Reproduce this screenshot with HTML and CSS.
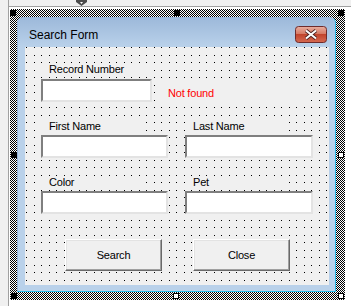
FILE: index.html
```html
<!DOCTYPE html>
<html lang="en">
<head>
    <meta charset="UTF-8">
    <title>Search Form - UserForm designer</title>
    <link rel="stylesheet" href="styles.css">
</head>
<body>
    <div class="ide">
        <div class="gutter"></div>
        <div class="canvas">
            <div class="ruler">
                <svg class="marker" width="11" height="6" viewBox="0 0 11 6">
                    <polygon points="0,0 11,0 11,2 5.5,6 0,2" fill="#4d4d4d"/>
                    <polygon points="4,2 7,2 5.5,4" fill="#fff"/>
                </svg>
            </div>
            <div class="selection">
                <span class="handle tl"></span>
                <span class="handle tm"></span>
                <span class="handle tr"></span>
                <span class="handle ml"></span>
                <span class="handle mr open"></span>
                <span class="handle bl"></span>
                <span class="handle bm open"></span>
                <span class="handle br open"></span>

                <div class="form">
                    <div class="titlebar">
                        <span class="title">Search Form</span>
                        <svg class="close-btn" width="32" height="17" viewBox="0 0 32 17">
                            <defs>
                                <linearGradient id="closeGrad" x1="0" y1="0" x2="0" y2="1">
                                    <stop offset="0" stop-color="#e9b0a2"/>
                                    <stop offset="0.45" stop-color="#d67a64"/>
                                    <stop offset="0.5" stop-color="#c2442c"/>
                                    <stop offset="1" stop-color="#d46a52"/>
                                </linearGradient>
                            </defs>
                            <rect x="0.5" y="0.5" width="31" height="16" rx="3" fill="url(#closeGrad)" stroke="#6e2c2c"/>
                            <path d="M11 4.5 L21 12.5 M21 4.5 L11 12.5" stroke="#4a1f1f" stroke-width="3.6"/>
                            <path d="M11 4.5 L21 12.5 M21 4.5 L11 12.5" stroke="#fff" stroke-width="2"/>
                        </svg>
                    </div>
                    <div class="frame">
                        <div class="client">
                            <div class="row row-record">
                                <div class="field wide">
                                    <span class="caption">Record Number</span>
                                    <input type="text" class="textbox">
                                </div>
                                <div class="status">Not found</div>
                            </div>
                            <div class="row pair">
                                <div class="field">
                                    <span class="caption short">First Name</span>
                                    <input type="text" class="textbox">
                                </div>
                                <div class="field">
                                    <span class="caption short">Last Name</span>
                                    <input type="text" class="textbox">
                                </div>
                            </div>
                            <div class="row pair">
                                <div class="field">
                                    <span class="caption short">Color</span>
                                    <input type="text" class="textbox">
                                </div>
                                <div class="field">
                                    <span class="caption short">Pet</span>
                                    <input type="text" class="textbox">
                                </div>
                            </div>
                            <div class="row buttons">
                                <button class="cmd">Search</button>
                                <button class="cmd">Close</button>
                            </div>
                        </div>
                    </div>
                </div>
            </div>
        </div>
    </div>
</body>
</html>
```

FILE: styles.css
```css
body {
    margin: 0;
    font-family: "Liberation Sans", Arial, sans-serif;
    background: #fff;
}
.ide {
    display: flex;
    width: 351px;
    height: 306px;
    overflow: hidden;
}
.gutter {
    width: 8px;
    flex: none;
    background: #f0f0f0;
    border-right: 1px solid #a0a0a0;
}
.canvas {
    flex: 1;
    background: #fff;
}
.ruler {
    position: relative;
    height: 6px;
    background: #f0f0f0;
    border-bottom: 1px solid #a0a0a0;
}
.marker {
    position: absolute;
    left: 67px;
    top: 0;
}
.selection {
    position: relative;
    width: 335px;
    height: 291px;
    margin: 2px 0 0 1px;
    padding: 8px 0 0 7px;
    box-sizing: border-box;
    background: repeating-conic-gradient(#000 0 25%, #fff 0 50%) 0 0 / 2px 2px;
}
.handle {
    position: absolute;
    width: 6px;
    height: 6px;
    box-sizing: border-box;
    background: #000;
    border: 1px solid #000;
}
.handle.open {
    background: #fff;
}
.tl { left: 0; top: 1px; }
.tm { left: 164px; top: 1px; }
.tr { right: 1px; top: 1px; }
.ml { left: 1px; top: 143px; }
.mr { right: 1px; top: 143px; }
.bl { left: 1px; bottom: 1px; }
.bm { left: 163px; bottom: 1px; }
.br { right: 1px; bottom: 1px; }

.form {
    width: 319px;
    height: 275px;
    box-sizing: border-box;
    display: flex;
    flex-direction: column;
    background: #b9d1ea;
    border: 1px solid #97b4d6;
    border-right-color: #2bbbe8;
    border-bottom-color: #2bbbe8;
    border-radius: 6px 6px 0 0;
}
.titlebar {
    height: 29px;
    box-sizing: border-box;
    display: flex;
    justify-content: space-between;
    align-items: flex-start;
    padding: 10px 8px 0 11px;
    background: linear-gradient(#9db9da, #b9d1ea);
    border-radius: 5px 5px 0 0;
}
.title {
    font-size: 12px;
    line-height: 14px;
    color: #000;
}
.close-btn {
    margin-top: -2px;
}
.frame {
    flex: 1;
    padding: 0 6px 6px 7px;
}
.client {
    height: 238px;
    box-sizing: border-box;
    padding: 16px 0 0 16px;
    background-color: #f0f0f0;
    background-image: url("data:image/svg+xml,%3Csvg xmlns='http://www.w3.org/2000/svg' width='15' height='15'%3E%3Cpath d='M0 0h1v1H0zM8 0h1v1H8zM0 8h1v1H0zM8 8h1v1H8z' fill='%23000'/%3E%3C/svg%3E");
    background-position: 1px 0;
    font-size: 11px;
    letter-spacing: -0.2px;
    color: #000;
}
.row {
    display: flex;
}
.field {
    display: flex;
    flex-direction: column;
}
.field.wide {
    width: 111px;
}
.caption {
    display: block;
    line-height: 13px;
    padding-left: 8px;
    margin-bottom: 2px;
    background: #f0f0f0;
    color: #000;
}
.wide .caption {
    margin-bottom: 3px;
}
.caption.short {
    width: 93px;
}
.textbox {
    display: block;
    height: 23px;
    margin: 0;
    padding: 0;
    box-sizing: border-box;
    background: #fff;
    border: 2px solid;
    border-color: #7f7f7f #e3e3e3 #e3e3e3 #7f7f7f;
    outline: none;
}
.status {
    margin: 18px 0 0 8px;
    width: 150px;
    height: 20px;
    box-sizing: border-box;
    padding: 6px 0 0 8px;
    line-height: 13px;
    color: #ff0000;
    background: #f0f0f0;
}
.pair {
    margin-top: 18px;
    gap: 17px;
}
.pair .field:first-child .textbox {
    width: 127px;
}
.pair .field:last-child .textbox {
    width: 128px;
}
.buttons {
    margin-top: 25px;
    padding-left: 24px;
    gap: 31px;
}
.cmd {
    width: 97px;
    height: 32px;
    margin: 0;
    padding: 0;
    font-family: inherit;
    font-size: 11px;
    letter-spacing: -0.2px;
    color: #000;
    background: #f0f0f0;
    border: 1px solid;
    border-color: #fff #696969 #696969 #fff;
    box-shadow: inset -1px -1px 0 #a0a0a0, inset 1px 1px 0 #e3e3e3;
}
```
